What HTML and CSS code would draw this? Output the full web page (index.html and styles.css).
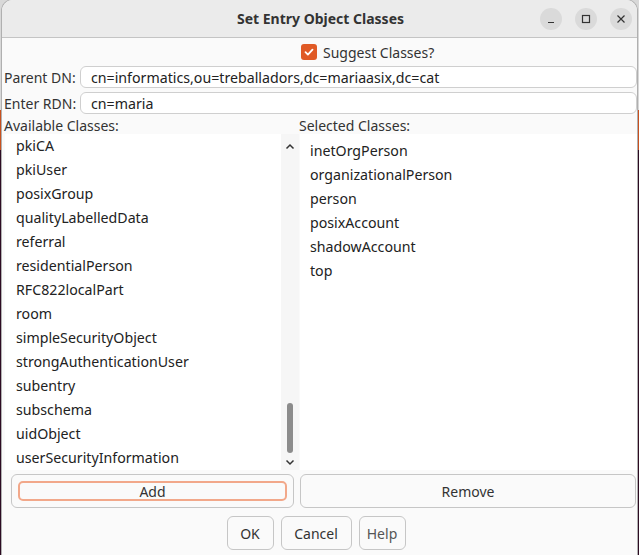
FILE: index.html
```html
<!DOCTYPE html>
<html>
<head>
<meta charset="utf-8">
<link rel="stylesheet" href="styles.css">
</head>
<body>
<div class="window">
  <div class="titlebar">
    <div class="title">Set Entry Object Classes</div>
    <div class="controls">
      <span class="ctl"><svg width="10" height="10" viewBox="0 0 10 10"><path d="M2 8.5h6" stroke="#333" stroke-width="1.2"/></svg></span>
      <span class="ctl"><svg width="10" height="10" viewBox="0 0 10 10"><rect x="1.5" y="1.5" width="7" height="7" fill="none" stroke="#333" stroke-width="1.2"/></svg></span>
      <span class="ctl"><svg width="10" height="10" viewBox="0 0 10 10"><path d="M1.5 1.5l7 7M8.5 1.5l-7 7" stroke="#333" stroke-width="1.2"/></svg></span>
    </div>
  </div>
  <div class="content">
    <div class="suggest">
      <span class="check"><svg width="12" height="12" viewBox="0 0 12 12"><path d="M2.5 6.2l2.4 2.4 4.6-5" fill="none" stroke="#fff" stroke-width="1.8" stroke-linecap="round" stroke-linejoin="round"/></svg></span>
      <span class="suggest-label">Suggest Classes?</span>
    </div>
    <div class="field">
      <span class="flabel">Parent DN:</span>
      <div class="input">cn=informatics,ou=treballadors,dc=mariaasix,dc=cat</div>
    </div>
    <div class="field">
      <span class="flabel">Enter RDN:</span>
      <div class="input">cn=maria</div>
    </div>
    <div class="lists">
      <div class="col left">
        <div class="clabel">Available Classes:</div>
        <div class="listbox">
          <ul class="items avail">
            <li>pkiCA</li>
            <li>pkiUser</li>
            <li>posixGroup</li>
            <li>qualityLabelledData</li>
            <li>referral</li>
            <li>residentialPerson</li>
            <li>RFC822localPart</li>
            <li>room</li>
            <li>simpleSecurityObject</li>
            <li>strongAuthenticationUser</li>
            <li>subentry</li>
            <li>subschema</li>
            <li>uidObject</li>
            <li>userSecurityInformation</li>
          </ul>
          <div class="scrollbar">
            <svg class="arrow" width="10" height="8" viewBox="0 0 10 8"><path d="M1.5 5.5l3.5-3.5 3.5 3.5" fill="none" stroke="#333" stroke-width="1.5"/></svg>
            <div class="track"><div class="thumb"></div></div>
            <svg class="arrow" width="10" height="8" viewBox="0 0 10 8"><path d="M1.5 2.5l3.5 3.5 3.5-3.5" fill="none" stroke="#333" stroke-width="1.5"/></svg>
          </div>
        </div>
        <div class="btn wide"><span class="focus">Add</span></div>
      </div>
      <div class="col right">
        <div class="clabel">Selected Classes:</div>
        <div class="listbox">
          <ul class="items sel">
            <li>inetOrgPerson</li>
            <li>organizationalPerson</li>
            <li>person</li>
            <li>posixAccount</li>
            <li>shadowAccount</li>
            <li>top</li>
          </ul>
        </div>
        <div class="btn wide">Remove</div>
      </div>
    </div>
    <div class="footer">
      <div class="btn small ok">OK</div>
      <div class="btn small cancel">Cancel</div>
      <div class="btn small help">Help</div>
    </div>
  </div>
</div>
</body>
</html>
```

FILE: styles.css
```css
html, body {
  margin: 0;
  padding: 0;
}
body {
  width: 639px;
  height: 555px;
  overflow: hidden;
  background: linear-gradient(to bottom, #d8d8d8 0px, #d8d8d8 110px, #c8501e 110px, #c8501e 150px, #2c0b22 150px);
  font-family: "Noto Sans", "DejaVu Sans", sans-serif;
  font-size: 14px;
  color: #2b2b2b;
}
.window {
  margin-left: 2px;
  width: 635px;
  height: 555px;
  background: #fafafa;
  border-radius: 11px 11px 0 0;
  box-shadow: 0 0 0 1px #b0b0b0;
  overflow: hidden;
  display: flex;
  flex-direction: column;
}
.titlebar {
  height: 37px;
  flex: none;
  background: #ebebeb;
  border-bottom: 1px solid #c4c4c4;
  display: flex;
  align-items: center;
  justify-content: center;
  position: relative;
}
.title {
  font-weight: bold;
  font-size: 14px;
  color: #333;
  margin-left: 2px;
}
.controls {
  position: absolute;
  right: 5px;
  top: 8px;
  display: flex;
  gap: 13px;
}
.ctl {
  width: 22px;
  height: 22px;
  border-radius: 50%;
  background: #dadada;
  display: flex;
  align-items: center;
  justify-content: center;
}
.content {
  flex: 1;
  display: flex;
  flex-direction: column;
}
.suggest {
  height: 28px;
  display: flex;
  align-items: center;
  padding-left: 299px;
}
.check {
  width: 16px;
  height: 16px;
  border-radius: 3px;
  background: #e05a26;
  display: flex;
  align-items: center;
  justify-content: center;
  margin-right: 6px;
}
.suggest-label {
  color: #333;
}
.field {
  display: flex;
  align-items: center;
  height: 22px;
  margin-bottom: 4px;
}
.flabel {
  width: 76px;
  padding-left: 2px;
  color: #333;
  flex: none;
}
.input {
  flex: 1;
  height: 20px;
  border: 1px solid #cfcfcf;
  border-radius: 6px;
  background: #fff;
  padding-left: 10px;
  display: flex;
  align-items: center;
  font-size: 14.2px;
  color: #222;
}
.lists {
  display: flex;
}
.col {
  display: flex;
  flex-direction: column;
}
.col.left {
  width: 297px;
}
.col.right {
  flex: 1;
}
.clabel {
  height: 16px;
  line-height: 16px;
  padding-left: 2px;
  color: #333;
}
.col.right .clabel {
  padding-left: 0;
}
.listbox {
  height: 336px;
  background: #fff;
  display: flex;
  margin-left: 3px;
  overflow: hidden;
}
.col.right .listbox {
  margin-left: 1px;
}
.items {
  list-style: none;
  margin: 0;
  padding: 0 0 0 11px;
  flex: 1;
  font-size: 14.2px;
  color: #222;
}
.items li {
  height: 24px;
  line-height: 24px;
}
.items.sel {
  padding-top: 5px;
  padding-left: 10px;
}
.scrollbar {
  width: 18px;
  background: #f6f6f6;
  display: flex;
  flex-direction: column;
  align-items: center;
  padding: 9px 0 4px;
  box-sizing: border-box;
}
.arrow {
  flex: none;
}
.track {
  flex: 1;
  width: 6px;
  display: flex;
  flex-direction: column;
  justify-content: flex-end;
  padding-bottom: 5px;
}
.thumb {
  height: 50px;
  background: #8c8c8c;
  border-radius: 3px;
}
.btn {
  box-sizing: border-box;
  border: 1px solid #c6c6c6;
  border-radius: 6px;
  background: #fafafa;
  display: flex;
  align-items: center;
  justify-content: center;
  color: #333;
}
.btn.wide {
  height: 34px;
  margin-top: 4px;
}
.col.left .btn.wide {
  margin-left: 9px;
  margin-right: 5px;
  padding: 6px;
}
.col.right .btn.wide {
  margin-left: 1px;
  margin-right: 1px;
}
.focus {
  flex: 1;
  align-self: stretch;
  border: 2px solid #f2a88a;
  border-radius: 5px;
  display: flex;
  align-items: center;
  justify-content: center;
}
.footer {
  display: flex;
  justify-content: center;
  gap: 7px;
  margin-top: 8px;
  padding-right: 7px;
}
.btn.small {
  height: 34px;
}
.ok { width: 47px; }
.cancel { width: 71px; }
.help { width: 47px; color: #555; }
```
